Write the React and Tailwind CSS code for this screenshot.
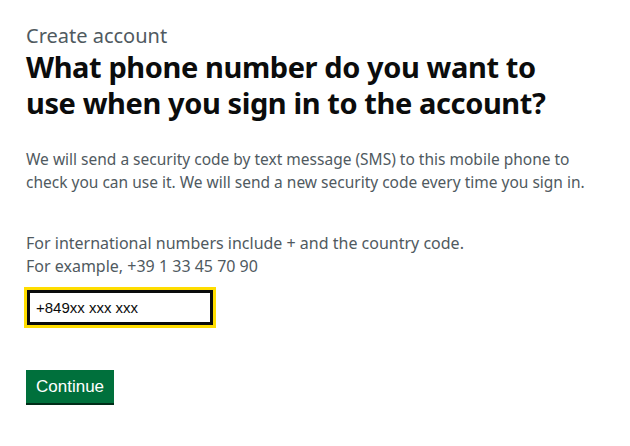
export default function App() {
    return (
        <div className="min-h-screen bg-white pl-[26px] pt-[23px]" style={{ fontFamily: '"Noto Sans", Arial, sans-serif' }}>
            <span className="block text-[20px] leading-[25px] text-[#505a5f]">Create account</span>
            <h1 className="mt-[1px] text-[29px] leading-[36px] font-bold text-[#0b0c0c] tracking-[-0.4px]">
                What phone number do you want to
                <br />
                use when you sign in to the account?
            </h1>

            <p className="mt-[27px] text-[15.5px] leading-[23px] text-[#505a5f]">
                We will send a security code by text message (SMS) to this mobile phone to
                <br />
                check you can use it. We will send a new security code every time you sign in.
            </p>

            <div className="mt-[38px] text-[16px] leading-[23px] text-[#505a5f]">
                <div>For international numbers include + and the country code.</div>
                <div>For example, +39 1 33 45 70 90</div>
            </div>

            <div className="mt-[9px] ml-[-2px] w-[192px] border-[3px] border-[#ffdd00]">
                <input
                    className="block w-full h-[35px] border-[3px] border-[#0b0c0c] px-[6px] text-[15px] text-[#0b0c0c] outline-none"
                    style={{ fontFamily: '"Liberation Sans", Arial, sans-serif' }}
                    defaultValue="+849xx xxx xxx"
                />
            </div>

            <button
                className="mt-[42px] block h-[33px] px-[10px] bg-[#00703c] text-white text-[17px] shadow-[0_2px_0_#002d18]"
                style={{ fontFamily: '"Liberation Sans", Arial, sans-serif' }}
            >
                Continue
            </button>
        </div>
    );
}
